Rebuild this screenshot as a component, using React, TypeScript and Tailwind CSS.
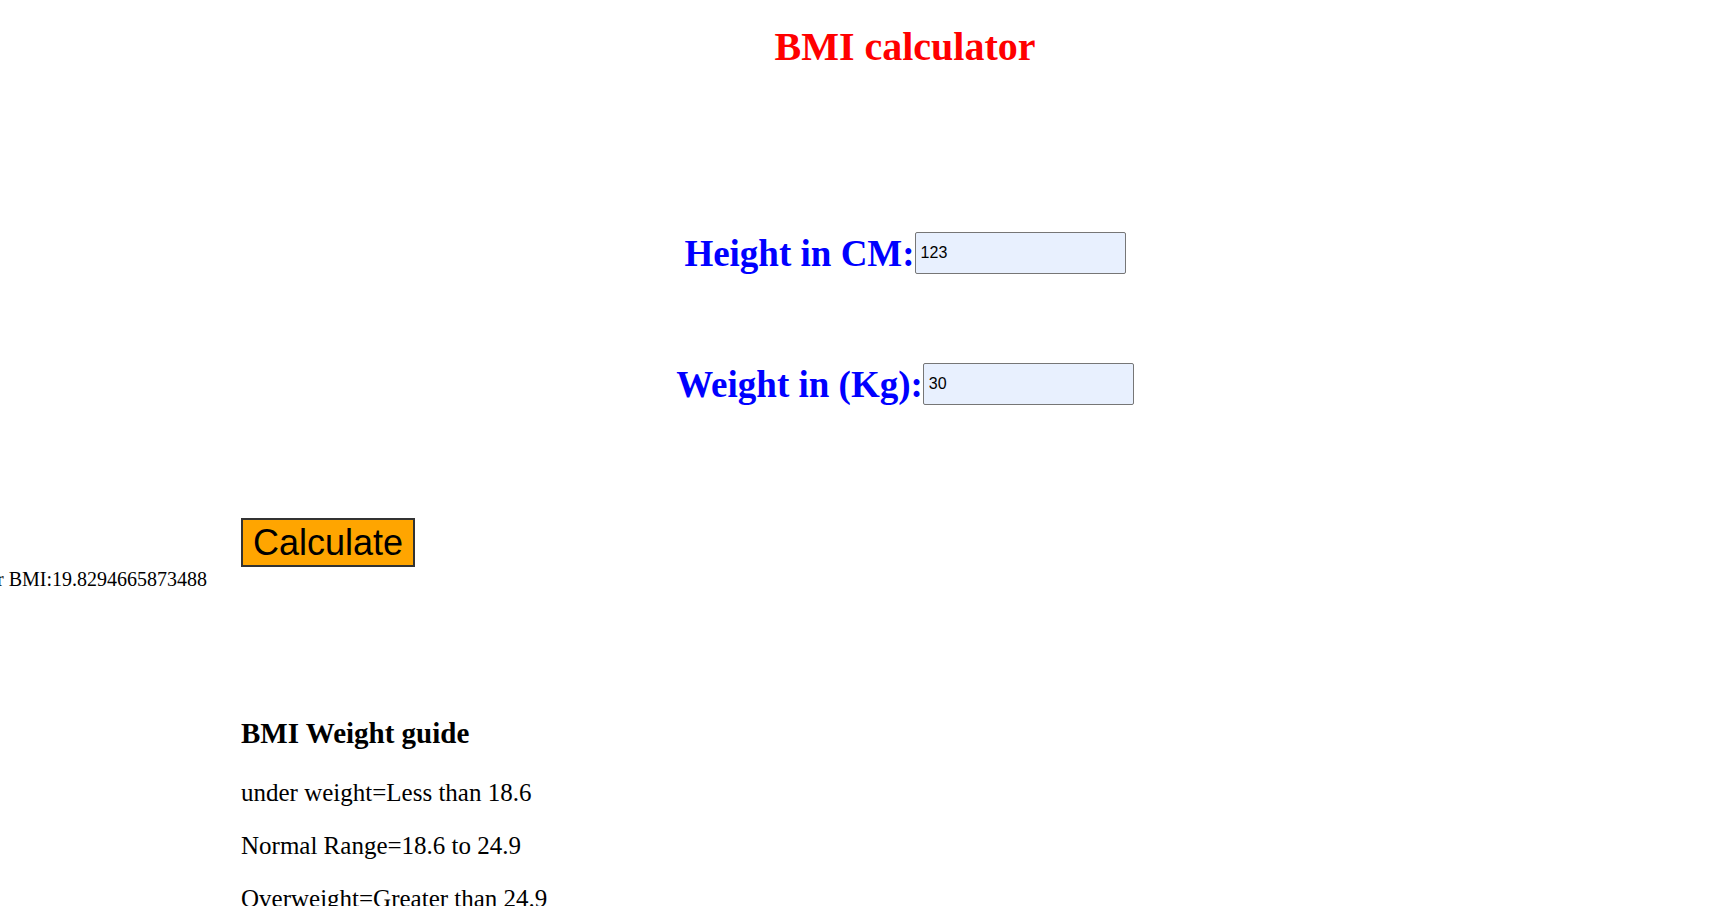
import React from 'react'

const GUIDE = ['under weight=Less than 18.6', 'Normal Range=18.6 to 24.9', 'Overweight=Greater than 24.9']

function Field({ label, value }: { label: string; value: string }) {
  return (
    <div className="flex h-[50px] items-center justify-center">
      <label className="mt-[1px] whitespace-nowrap text-[37px] font-bold leading-[42px] text-[#0000ff]">{label}</label>
      <input
        type="text"
        defaultValue={value}
        className="h-[42px] w-[211px] rounded-[2px] border border-[#767676] bg-[#e8f0fe] px-[5px] font-['Liberation_Sans',Arial,sans-serif] text-[16px] text-black outline-none"
      />
    </div>
  )
}

export default function App() {
  return (
    <div className="min-h-screen overflow-hidden bg-white font-['Liberation_Serif','Times_New_Roman',serif] text-black">
      <h1 className="pl-[100px] pt-[24px] text-center text-[40px] font-bold leading-[46px] text-[#ff0000]">BMI calculator</h1>

      {/* form */}
      <div className="mt-[158px] pl-[100px]">
        <Field label="Height in CM:" value="123" />
        <div className="mt-[81px]">
          <Field label="Weight in (Kg):" value="30" />
        </div>
      </div>

      {/* calculate + result */}
      <div className="mt-[109px] flex items-start">
        <div className="flex w-[241px] shrink-0 justify-end whitespace-nowrap pr-[34px] pt-[50px] text-[20px] leading-[23px]">
          Your BMI:19.8294665873488
        </div>
        <button className="h-[49px] border-2 border-[#333333] bg-[#ffa500] px-[10px] font-['Liberation_Sans',Arial,sans-serif] text-[36px] leading-[41px] text-black">
          Calculate
        </button>
      </div>

      {/* guide */}
      <div className="mt-[126px] pl-[241px]">
        <h3 className="text-[29px] font-bold leading-[33px]">BMI Weight guide</h3>
        {GUIDE.map((g, i) => (
          <p key={i} className={i === 0 ? 'mt-[29px] text-[25px] leading-[28px]' : 'mt-[25px] text-[25px] leading-[28px]'}>
            {g}
          </p>
        ))}
      </div>
    </div>
  )
}
